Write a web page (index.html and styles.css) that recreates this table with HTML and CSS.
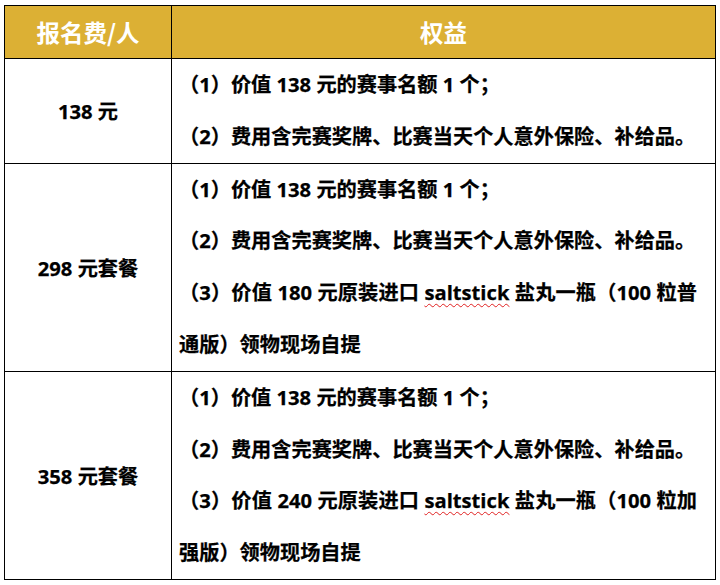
FILE: index.html
```html
<!DOCTYPE html>
<html lang="zh-CN">
<head>
<meta charset="utf-8">
<title>报名费</title>
<link rel="stylesheet" href="styles.css">
</head>
<body>
<table class="fee-table">
  <colgroup>
    <col class="col-fee">
    <col class="col-benefit">
  </colgroup>
  <thead>
    <tr>
      <th>报名费/人</th>
      <th>权益</th>
    </tr>
  </thead>
  <tbody>
    <tr>
      <td class="fee">138 元</td>
      <td class="benefit">
        <p class="item">（1）价值 138 元的赛事名额 1 个；</p>
        <p class="item">（2）费用含完赛奖牌、比赛当天个人意外保险、补给品。</p>
      </td>
    </tr>
    <tr>
      <td class="fee">298 元套餐</td>
      <td class="benefit">
        <p class="item">（1）价值 138 元的赛事名额 1 个；</p>
        <p class="item">（2）费用含完赛奖牌、比赛当天个人意外保险、补给品。</p>
        <p class="item"><span class="line-first">（3）价值 180 元原装进口 <span class="spell">saltstick</span> 盐丸一瓶（100 粒普</span><span class="line-rest">通版）领物现场自提</span></p>
      </td>
    </tr>
    <tr>
      <td class="fee">358 元套餐</td>
      <td class="benefit">
        <p class="item">（1）价值 138 元的赛事名额 1 个；</p>
        <p class="item">（2）费用含完赛奖牌、比赛当天个人意外保险、补给品。</p>
        <p class="item"><span class="line-first">（3）价值 240 元原装进口 <span class="spell">saltstick</span>  盐丸一瓶（100 粒加</span><span class="line-rest">强版）领物现场自提</span></p>
      </td>
    </tr>
  </tbody>
</table>
</body>
</html>
```
FILE: styles.css
```css
html, body {
  margin: 0;
  padding: 0;
  background: #ffffff;
}

body {
  padding: 5px 0 0 4px;
  font-family: "Open Sans", "Noto Sans CJK SC", sans-serif;
  color: #000000;
}

.fee-table {
  border-collapse: collapse;
  width: 712px;
  table-layout: fixed;
}

.col-fee {
  width: 167px;
}

.fee-table th,
.fee-table td {
  border: 1px solid #000000;
  padding: 0;
}

.fee-table th {
  background: #dcb034;
  color: #ffffff;
  font-family: "Noto Sans CJK SC", sans-serif;
  font-size: 23.5px;
  font-weight: 700;
  height: 52px;
  text-align: center;
  vertical-align: middle;
}

.fee {
  font-size: 20.2px;
  font-weight: 700;
  text-align: center;
  vertical-align: middle;
  -webkit-text-stroke: 0.25px #000000;
}

.benefit {
  padding: 0 18px 0 7px !important;
  vertical-align: top;
}

.item {
  margin: 0;
  font-size: 20.2px;
  font-weight: 700;
  line-height: 51.8px;
  white-space: nowrap;
  -webkit-text-stroke: 0.25px #000000;
}

.line-first {
  display: block;
  text-align: justify;
  text-align-last: justify;
}

.line-rest {
  display: block;
}

.spell {
  text-decoration: underline wavy #e02020;
  text-decoration-thickness: 1px;
  text-underline-offset: 3px;
}
```
